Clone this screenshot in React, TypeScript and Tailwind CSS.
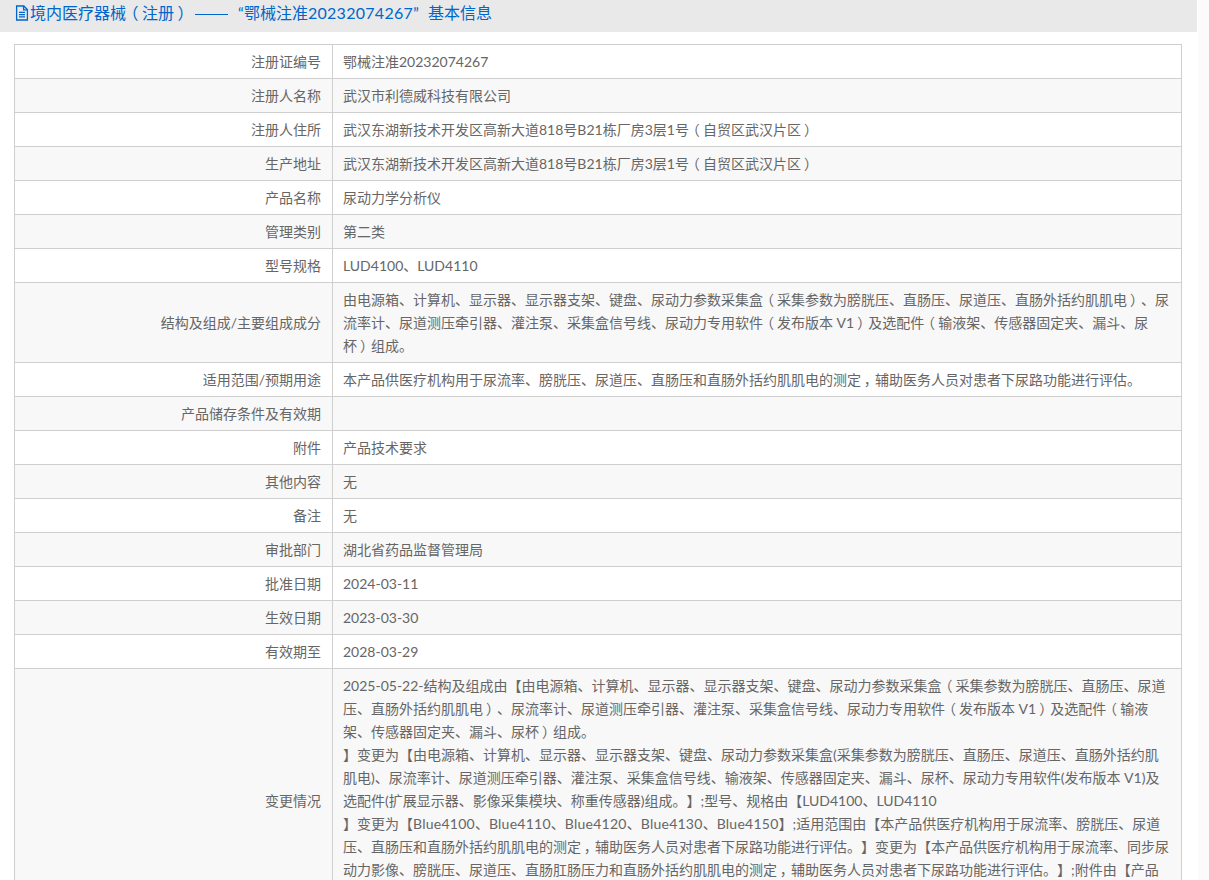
import { Fragment } from 'react'

const FONT = "font-['Lato','Noto_Sans_CJK_SC',sans-serif]"

const LOCATION = '武汉东湖新技术开发区高新大道818号B21栋厂房3层1号（自贸区武汉片区）'

const ROWS: { label: string; lines: string[] }[] = [
  { label: '注册证编号', lines: ['鄂械注准20232074267'] },
  { label: '注册人名称', lines: ['武汉市利德威科技有限公司'] },
  { label: '注册人住所', lines: [LOCATION] },
  { label: '生产地址', lines: [LOCATION] },
  { label: '产品名称', lines: ['尿动力学分析仪'] },
  { label: '管理类别', lines: ['第二类'] },
  { label: '型号规格', lines: ['LUD4100、LUD4110'] },
  {
    label: '结构及组成/主要组成成分',
    lines: [
      '由电源箱、计算机、显示器、显示器支架、键盘、尿动力参数采集盒（采集参数为膀胱压、直肠压、尿道压、直肠外括约肌肌电）、尿',
      '流率计、尿道测压牵引器、灌注泵、采集盒信号线、尿动力专用软件（发布版本 V1）及选配件（输液架、传感器固定夹、漏斗、尿',
      '杯）组成。',
    ],
  },
  {
    label: '适用范围/预期用途',
    lines: ['本产品供医疗机构用于尿流率、膀胱压、尿道压、直肠压和直肠外括约肌肌电的测定，辅助医务人员对患者下尿路功能进行评估。'],
  },
  { label: '产品储存条件及有效期', lines: [''] },
  { label: '附件', lines: ['产品技术要求'] },
  { label: '其他内容', lines: ['无'] },
  { label: '备注', lines: ['无'] },
  { label: '审批部门', lines: ['湖北省药品监督管理局'] },
  { label: '批准日期', lines: ['2024-03-11'] },
  { label: '生效日期', lines: ['2023-03-30'] },
  { label: '有效期至', lines: ['2028-03-29'] },
  {
    label: '变更情况',
    lines: [
      '2025-05-22-结构及组成由【由电源箱、计算机、显示器、显示器支架、键盘、尿动力参数采集盒（采集参数为膀胱压、直肠压、尿道',
      '压、直肠外括约肌肌电）、尿流率计、尿道测压牵引器、灌注泵、采集盒信号线、尿动力专用软件（发布版本 V1）及选配件（输液',
      '架、传感器固定夹、漏斗、尿杯）组成。',
      '】变更为【由电源箱、计算机、显示器、显示器支架、键盘、尿动力参数采集盒(采集参数为膀胱压、直肠压、尿道压、直肠外括约肌',
      '肌电)、尿流率计、尿道测压牵引器、灌注泵、采集盒信号线、输液架、传感器固定夹、漏斗、尿杯、尿动力专用软件(发布版本 V1)及',
      '选配件(扩展显示器、影像采集模块、称重传感器)组成。】;型号、规格由【LUD4100、LUD4110',
      '】变更为【Blue4100、Blue4110、Blue4120、Blue4130、Blue4150】;适用范围由【本产品供医疗机构用于尿流率、膀胱压、尿道',
      '压、直肠压和直肠外括约肌肌电的测定，辅助医务人员对患者下尿路功能进行评估。】变更为【本产品供医疗机构用于尿流率、同步尿',
      '动力影像、膀胱压、尿道压、直肠肛肠压力和直肠外括约肌肌电的测定，辅助医务人员对患者下尿路功能进行评估。】;附件由【产品',
      '技术要求',
      '】变更为【产品技术要求】。',
    ],
  },
]

// The source font centres full-width brackets and commas in their cell, Noto pushes them to one side
function Punct({ text }: { text: string }) {
  return (
    <>
      {text.split(/([（），]|Blue\d+)/).map((part, i) => {
        if (part === '（') return <span key={i} className="inline-block -translate-x-[0.22em]">{part}</span>
        if (part === '）') return <span key={i} className="inline-block translate-x-[0.22em]">{part}</span>
        if (part === '，') return <span key={i} className="inline-block translate-x-[0.2em]">{part}</span>
        if (part.startsWith('Blue')) return <span key={i} className="tracking-[0.25px]">{part}</span>
        return <Fragment key={i}>{part}</Fragment>
      })}
    </>
  )
}

function FileIcon() {
  return (
    <svg viewBox="0 0 14 16" className="w-[14px] h-[16px] shrink-0" fill="none" stroke="#0066cc" strokeWidth="1.3">
      <path d="M1.6 1h7.2l3.6 3.6V15H1.6z" />
      <path d="M8.6 1v3.8h3.8M4 7.4h6M4 9.6h6M4 11.8h6" />
    </svg>
  )
}

export default function App() {
  return (
    <div className={`flex h-[880px] overflow-hidden bg-white [text-spacing-trim:space-all] ${FONT}`}>
      <div className="w-[1197px] shrink-0">
        <div className="h-[32px] bg-[#e9e9e9] pl-[15px] flex items-center gap-px text-[16px] leading-[26px] text-[#0066cc] pb-[6px]">
          <FileIcon />
          <span className="whitespace-nowrap">
            <Punct text="境内医疗器械（注册）" />
            <span className="ml-[5px] inline-block w-[33px] h-px align-middle bg-[#0066cc]" />
            <span className="ml-[10px]">“</span>
            鄂械注准<span className="tracking-[0.28px]">20232074267</span>
            <span>”</span>
            <span className="ml-[9px]">基本信息</span>
          </span>
        </div>
        <div className="pt-[12px] pl-[14px]">
          <table className="w-[1168px] table-fixed border-collapse text-[14px] leading-[23px] text-[#666]">
            <colgroup>
              <col className="w-[318px]" />
              <col />
            </colgroup>
            <tbody>
              {ROWS.map((row, i) => (
                <tr key={row.label} className={i % 2 === 1 ? 'bg-[#f8f8f8]' : 'bg-white'}>
                  <td className="border border-[#cfcfcf] py-[5px] pl-[10px] pr-[11px] text-right align-middle">{row.label}</td>
                  <td className="border border-[#cfcfcf] py-[5px] px-[10px] align-middle whitespace-nowrap">
                    {row.lines.map((line, j) => (
                      <div key={j}>{line ? <Punct text={line} /> : '\u00a0'}</div>
                    ))}
                  </td>
                </tr>
              ))}
            </tbody>
          </table>
        </div>
      </div>
      <div className="flex-1 pl-px">
        <div className="h-full bg-[#fbfbfb]" />
      </div>
    </div>
  )
}
